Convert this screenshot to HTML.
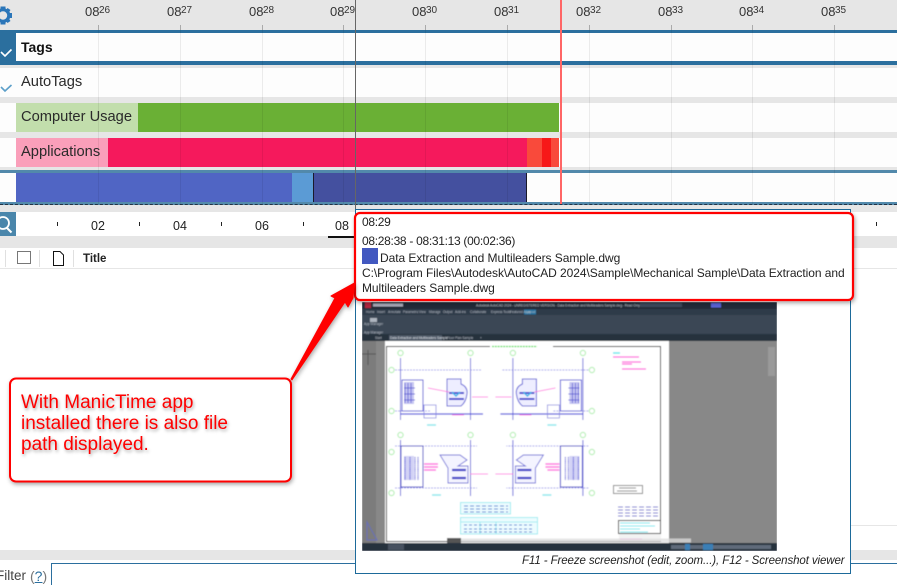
<!DOCTYPE html>
<html><head><meta charset="utf-8"><style>
html,body{margin:0;padding:0;width:897px;height:585px;overflow:hidden;background:#fff}
body{position:relative;font-family:"Liberation Sans",sans-serif;color:#222}
.a,.t{position:absolute}
.t{white-space:nowrap;line-height:1}
.h{font-size:13px;top:5px;color:#333}
.s{font-size:10px;top:6px;color:#333}
.g{position:absolute;top:25px;height:180px;width:1px;background:rgba(0,0,0,.07)}
.k{position:absolute;top:25px;height:5px;width:1px;background:#aaa}
.m{position:absolute;top:222px;height:4px;width:1px;background:#222}
.n{font-size:12.5px;top:220px;color:#222}
.l{font-size:14.7px;color:#2a2a2a}
.tip{font-size:12px;left:362px;color:#222;letter-spacing:-.06px}
.c{font-size:19px;left:21px;color:#f00;text-shadow:1px 2px 3px rgba(0,0,0,.35)}
</style></head><body>
<div class="a" style="left:0;top:0;width:897px;height:30px;background:#e6e6e6"></div>
<div class="a" style="left:0;top:30px;width:897px;height:35px;background:#2b6f9e"></div>
<div class="a" style="left:16px;top:33px;width:881px;height:28px;background:#fdfdfd"></div>
<div class="a" style="left:0;top:65px;width:897px;height:3px;background:#e6e6e6"></div>
<div class="a" style="left:0;top:68px;width:897px;height:29px;background:#fdfdfd"></div>
<div class="a" style="left:0;top:97px;width:897px;height:6px;background:#e6e6e6"></div>
<div class="a" style="left:0;top:103px;width:897px;height:29px;background:#fdfdfd"></div>
<div class="a" style="left:0;top:132px;width:897px;height:6px;background:#e6e6e6"></div>
<div class="a" style="left:0;top:138px;width:897px;height:29px;background:#fdfdfd"></div>
<div class="a" style="left:0;top:167px;width:897px;height:3px;background:#e6e6e6"></div>
<div class="a" style="left:0;top:170px;width:897px;height:3px;background:#5289ab"></div>
<div class="a" style="left:0;top:173px;width:897px;height:29px;background:#fdfdfd"></div>
<div class="a" style="left:0;top:202px;width:897px;height:3px;background:#5289ab"></div>
<div class="a" style="left:0;top:204px;width:897px;height:1px;border-top:1px dashed #234"></div>
<div class="a" style="left:0;top:205px;width:897px;height:7px;background:#e6e6e6"></div>
<div class="a" style="left:0;top:236px;width:897px;height:12px;background:#e6e6e6"></div>
<div class="a" style="left:0;top:268px;width:897px;height:1px;background:#e6e6e6"></div>
<div class="a" style="left:851px;top:525px;width:46px;height:1px;background:#e6e6e6"></div>
<div class="a" style="left:0;top:550px;width:897px;height:10px;background:#e6e6e6"></div>
<div class="a" style="left:51px;top:563px;width:846px;height:22px;border-top:1px solid #2b6f9e;border-left:1px solid #2b6f9e;box-sizing:border-box"></div>

<!-- bars -->
<div class="a" style="left:16px;top:103px;width:122px;height:29px;background:#c2deac"></div>
<div class="a" style="left:138px;top:103px;width:421px;height:29px;background:#6ab035"></div>
<div class="a" style="left:16px;top:138px;width:92px;height:29px;background:#fa9fba"></div>
<div class="a" style="left:108px;top:138px;width:419px;height:29px;background:#f5195c"></div>
<div class="a" style="left:527px;top:138px;width:15px;height:29px;background:#f94a3b"></div>
<div class="a" style="left:542px;top:138px;width:9px;height:29px;background:#f71818"></div>
<div class="a" style="left:551px;top:138px;width:8px;height:29px;background:#f94a3b"></div>
<div class="a" style="left:16px;top:173px;width:276px;height:29px;background:#5065c4"></div>
<div class="a" style="left:292px;top:173px;width:21px;height:29px;background:#5b9bd5"></div>
<div class="a" style="left:313px;top:173px;width:1px;height:29px;background:#1a1a2a"></div>
<div class="a" style="left:314px;top:173px;width:212px;height:29px;background:#44509f"></div>
<div class="a" style="left:526px;top:173px;width:1px;height:29px;background:#1a1a2a"></div>

<!-- grid -->
<div class="g" style="left:98px"></div><div class="g" style="left:180px"></div><div class="g" style="left:262px"></div><div class="g" style="left:343px"></div><div class="g" style="left:425px"></div><div class="g" style="left:507px"></div><div class="g" style="left:589px"></div><div class="g" style="left:671px"></div><div class="g" style="left:752px"></div><div class="g" style="left:834px"></div>
<div class="k" style="left:98px"></div><div class="k" style="left:180px"></div><div class="k" style="left:262px"></div><div class="k" style="left:343px"></div><div class="k" style="left:425px"></div><div class="k" style="left:507px"></div><div class="k" style="left:589px"></div><div class="k" style="left:671px"></div><div class="k" style="left:752px"></div><div class="k" style="left:834px"></div>

<!-- top labels -->
<span class="t h" style="left:85px">08</span><span class="t s" style="left:99px">26</span>
<span class="t h" style="left:167px">08</span><span class="t s" style="left:181px">27</span>
<span class="t h" style="left:249px">08</span><span class="t s" style="left:263px">28</span>
<span class="t h" style="left:330px">08</span><span class="t s" style="left:344px">29</span>
<span class="t h" style="left:412px">08</span><span class="t s" style="left:426px">30</span>
<span class="t h" style="left:494px">08</span><span class="t s" style="left:508px">31</span>
<span class="t h" style="left:576px">08</span><span class="t s" style="left:590px">32</span>
<span class="t h" style="left:658px">08</span><span class="t s" style="left:672px">33</span>
<span class="t h" style="left:739px">08</span><span class="t s" style="left:753px">34</span>
<span class="t h" style="left:821px">08</span><span class="t s" style="left:835px">35</span>

<!-- row labels -->
<span class="t" style="left:21px;top:40px;font-size:14px;font-weight:bold;color:#111">Tags</span>
<span class="t l" style="left:21px;top:75px">AutoTags</span>
<span class="t l" style="left:21px;top:110px">Computer Usage</span>
<span class="t l" style="left:21px;top:145px">Applications</span>

<!-- vertical markers -->
<div class="a" style="left:355px;top:0;width:1px;height:209px;background:#666"></div>
<div class="a" style="left:560px;top:0;width:2px;height:204px;background:#f66"></div>

<!-- mini ruler -->
<div class="a" style="left:0;top:212px;width:16px;height:24px;background:#4a86ab"></div>
<div class="m" style="left:57px"></div><div class="m" style="left:139px"></div><div class="m" style="left:221px"></div><div class="m" style="left:303px"></div><div class="m" style="left:876px"></div>
<span class="t n" style="left:91px">02</span><span class="t n" style="left:173px">04</span><span class="t n" style="left:255px">06</span><span class="t n" style="left:335px">08</span>
<div class="a" style="left:328px;top:236px;width:27px;height:2px;background:#111"></div>

<!-- table header -->
<div class="a" style="left:5px;top:250px;width:1px;height:17px;background:#e0e0e0"></div>
<div class="a" style="left:39px;top:250px;width:1px;height:17px;background:#e0e0e0"></div>
<div class="a" style="left:73px;top:250px;width:1px;height:17px;background:#e0e0e0"></div>
<div class="a" style="left:17px;top:251px;width:14px;height:13px;border:1px solid #777;box-sizing:border-box"></div>
<span class="t" style="left:83px;top:254px;font-size:11.5px;font-weight:bold;color:#222">Title</span>
<span class="t" style="left:-4px;top:569px;font-size:13.5px;color:#444">Filter</span>
<span class="t" style="left:30px;top:569px;font-size:14px;color:#777">(<span style="color:#2b6f9e;text-decoration:underline">?</span>)</span>

<!-- tooltip -->
<div class="a" style="left:355px;top:209px;width:496px;height:365px;box-sizing:border-box;border:1px solid #1d6a9a;background:#fff"></div>

<svg class="a" style="left:0;top:0" width="897" height="585" viewBox="0 0 897 585">
<defs>
<filter id="sh" x="-10%" y="-10%" width="125%" height="130%"><feDropShadow dx="1" dy="2" stdDeviation="2.2" flood-color="#000" flood-opacity=".35"/></filter>
<filter id="bl" x="0" y="0" width="100%" height="100%"><feGaussianBlur stdDeviation=".5"/></filter>
<g id="c1" fill="none" stroke="#b9f0b9" stroke-width="1.2"><circle cx="400.5" cy="353" r="2.6"/><circle cx="470.5" cy="353" r="2.6"/><circle cx="391.5" cy="370" r="2.6"/><circle cx="391.5" cy="411" r="2.6"/></g>
<g id="top">
 <use href="#c1"/>
 <path d="M395 370H482M395 411H430" stroke="#a9a9ee" stroke-width="1" stroke-dasharray="2 1" fill="none"/>
 <path d="M400.500 358V420M470.500 358V420" stroke="#7777dd" stroke-width="1" fill="none"/>
 <path d="M400 414H483" stroke="#5555dd" stroke-width="1.3" fill="none"/>
 <path d="M402 380H423V411H402Z" fill="none" stroke="#5a5ad8" stroke-width="1"/>
 <path d="M404 382H414V404H404Z" fill="#c5c5f2"/>
 <path d="M405 383V403M408 383V403M411 383V403M404 388H415M404 394H415M404 400H415" stroke="#5151d0" stroke-width=".7"/>
 <path d="M447 379H461V384Q468 387 467 394Q466 402 461 406H447Z" fill="#eef" stroke="#6868d8" stroke-width="1"/>
 <path d="M449 393H464M449 399H464" stroke="#4a4ad0" stroke-width="2"/>
 <path d="M452 392l4 4 4-4" stroke="#39b2e8" fill="none" stroke-width="1.500"/>
 <path d="M428 388L449 392M472 397H488M452 415H464" stroke="#ff66dd" stroke-width=".8" fill="none"/>
 <path d="M424 405H436V418H424Z" fill="none" stroke="#8a8ae0" stroke-width=".8"/>
 <path d="M427 425H436" stroke="#8ce8ee" stroke-width="1.500"/>
</g>
<g id="bot">
 <use href="#c1" transform="translate(0,82)"/>
 <path d="M395 446H477M395 488H477" stroke="#a9a9ee" stroke-width="1" stroke-dasharray="2 1" fill="none"/>
 <path d="M400.500 440V496M470.500 440V496" stroke="#6b6bdc" stroke-width="1" fill="none"/>
 <path d="M401 446H423V487H401Z" fill="none" stroke="#3f3fc8" stroke-width="1"/>
 <path d="M404 456H414V480H404Z" fill="#d3d3f5"/>
 <path d="M405 457V480M410 457V480M415 457V480M418 457V480" stroke="#5757d8" stroke-width="1.200" stroke-dasharray="1 .6"/>
 <path d="M440 455H460L467 460L458 466H468V483H448V468Z" fill="#f4f4ff" stroke="#7070d8" stroke-width=".9"/>
 <path d="M452 470H466M452 478H466" stroke="#4040c8" stroke-width="2.200"/>
 <path d="M424 464H438M424 467H438M424 470H436" stroke="#ff77e0" stroke-width="1.500"/>
 <path d="M470 474H488" stroke="#ff66dd" stroke-width=".8"/>
 <path d="M432 495H441" stroke="#8ce8ee" stroke-width="1.500"/>
</g>
</defs>

<!-- embedded CAD screenshot -->
<g filter="url(#bl)">
 <rect x="362" y="302" width="415" height="249" fill="#888"/>
 <rect x="362" y="302" width="415" height="7" fill="#212b38"/>
 <rect x="362" y="309" width="415" height="25" fill="#3b4655"/>
 <rect x="362" y="309" width="415" height="6" fill="#2f3a49"/>
 <rect x="362" y="334" width="415" height="7" fill="#28323e"/>
 <rect x="365" y="302" width="6" height="6" fill="#b3263f"/>
 <rect x="373" y="303.500" width="30" height="3" fill="#aab"/>
 <rect x="524" y="309.500" width="12" height="5" fill="#1f6f9e"/>
 <rect x="389" y="335" width="53" height="6" fill="#4b5665"/>
 <text x="476" y="306.500" font-size="3.200" fill="#c6ccd4" font-family="Liberation Sans">Autodesk AutoCAD 2024 - UNREGISTERED VERSION - Data Extraction and Multileaders Sample.dwg - Read Only</text>
 <g font-size="3.200" fill="#b6bdc6" font-family="Liberation Sans">
  <text x="366" y="313">Home</text><text x="377" y="313">Insert</text><text x="388" y="313">Annotate</text><text x="403" y="313">Parametric</text><text x="419" y="313">View</text><text x="429" y="313">Manage</text><text x="443" y="313">Output</text><text x="455" y="313">Add-ins</text><text x="470" y="313">Collaborate</text><text x="491" y="313">Express Tools</text><text x="510" y="313">Featured Apps</text><text x="526" y="313">Layout</text>
  <text x="364" y="325">App Manager</text><text x="364" y="333.500">App Manager</text>
  <text x="375" y="339">Start</text><text x="390" y="339" fill="#e4e8ee">Data Extraction and Multileaders Sample</text><text x="447" y="339">Floor Plan Sample</text><text x="480" y="339">+</text>
  <text x="376" y="548.500">Model</text><text x="389" y="548.500">Layout1</text>
 </g>
 <rect x="640" y="303" width="42" height="4" fill="#3d4a5c"/>
 <rect x="711" y="303" width="10" height="4.500" fill="#5a63d8"/>
 <path d="M370 318h7v4h-7z" fill="#aeb5bf"/>
 <rect x="362" y="341" width="14" height="202" fill="#7c7c7c"/>
 <path d="M368 350V365M362 354H376" stroke="#555" stroke-width="1"/>
 <rect x="385" y="341" width="284" height="202" fill="#fff"/>
 <rect x="386.500" y="346.500" width="274" height="195" fill="none" stroke="#222" stroke-width="1"/>
 <rect x="490" y="345" width="63" height="3" fill="#fff"/>
 <path d="M492 346.500H537" stroke="#55dd55" stroke-width="1.200" stroke-dasharray="2 .8"/>
 <use href="#top"/><use href="#top" transform="translate(983.400,0) scale(-1,1)"/>
 <use href="#bot"/><use href="#bot" transform="translate(983.400,0) scale(-1,1)"/>
 <path d="M367 522L377 540H367Z" fill="none" stroke="#6770b8" stroke-width="1"/>
 <!-- tables -->
 <rect x="460.500" y="502.500" width="50" height="11.500" fill="#ecfcff" stroke="#8ee8ee" stroke-width=".8"/>
 <path d="M464 506H508M464 509H508M464 512H508" stroke="#5a8ad6" stroke-width=".9" stroke-dasharray="4 2"/>
 <rect x="460.500" y="517.500" width="77" height="16.500" fill="#ecfcff" stroke="#8ee8ee" stroke-width=".8"/>
 <path d="M461 522H537M480 522V534M496 522V534" stroke="#8ee8ee" stroke-width=".8"/>
 <path d="M464 525H534M464 529H534M464 532H534" stroke="#5a8ad6" stroke-width=".9" stroke-dasharray="3 2"/>
 <!-- notes / title block -->
 <path d="M613 353H620" stroke="#67e8ee" stroke-width="1.500"/>
 <path d="M613 357H639M622 362H641M622 364H632M622 369H646" stroke="#ff66dd" stroke-width="1.200"/>
 <rect x="613.500" y="485.500" width="29" height="8" fill="#fff" stroke="#888" stroke-width="1"/>
 <path d="M619 488H636M617 491H637" stroke="#888" stroke-width=".9"/>
 <path d="M618 507H659M618 510H659M618 513H659M618 516H659" stroke="#7070d0" stroke-width=".9" stroke-dasharray="5 2"/>
 <rect x="618.500" y="520.500" width="42" height="13" fill="#fff" stroke="#333" stroke-width="1"/>
 <path d="M620 523H650M620 526H655M620 529H640M620 532H648" stroke="#67e8ee" stroke-width="1"/>
 <rect x="619" y="534" width="42" height="7" fill="#f3f3f3"/>
 <path d="M620 539H642" stroke="#ff88e4" stroke-width="1"/>
 <rect x="447" y="538.500" width="244" height="4" fill="#ddd" fill-opacity=".75"/>
 <rect x="447" y="538" width="14" height="5" fill="#555"/>
 <rect x="768" y="347" width="7" height="29" fill="#9a9a9a"/>
 <rect x="362" y="543" width="415" height="8" fill="#27313d"/>
 <rect x="388" y="544" width="16" height="6" fill="#46515f"/>
 <rect x="671" y="545" width="100" height="4" fill="#5f6b7a"/>
 <rect x="685" y="544" width="5" height="6" fill="#3b7fb6"/><rect x="703" y="544" width="10" height="6" fill="#3b7fb6"/>
</g>

<!-- red box -->
<rect x="355" y="213" width="498" height="87" rx="5" fill="#fff" stroke="#f00" stroke-width="2.200" filter="url(#sh)"/>
<rect x="362" y="248" width="16" height="16" fill="#4258c0"/>

<!-- callout -->
<rect x="10" y="378.500" width="281" height="103" rx="6" fill="#fff" stroke="#f00" stroke-width="2" filter="url(#sh)"/>
<path d="M291 379L335 298L331 296L354.500 283L353 298L348 307L345 302L292 380Z" fill="#f00" stroke="#f00" stroke-width="1" stroke-linejoin="round" filter="url(#sh)"/>

<!-- gear -->
<g fill="#2b76b9">
 <circle cx="3" cy="15.500" r="5.800" fill="none" stroke="#2b76b9" stroke-width="3.200"/>
 <path d="M0.500 6.500h5v3h-5zM0.500 21.500h5v3h-5zM9 13h3v5h-3zM-3 13h3v5h-3z"/>
 <path d="M7.500 8l3 2-2 3-3-2zM5.500 20l3-2 2 3-3 2z"/>
</g>
<!-- check marks -->
<path d="M1 52L5 56L11.500 49.500" fill="none" stroke="#fff" stroke-width="1.600"/>
<path d="M1 87L5 91L11.500 85" fill="none" stroke="#5c9fc9" stroke-width="1.600"/>
<!-- search -->
<circle cx="3" cy="223" r="6" fill="none" stroke="#fff" stroke-width="1.800"/>
<path d="M7 228L11.500 232.500" stroke="#fff" stroke-width="2"/>
<!-- doc icon -->
<path d="M53.500 251.500H60L63.500 255V265.500H53.500Z" fill="#fff" stroke="#111" stroke-width="1"/>
</svg>

<span class="t tip" style="top:216px;letter-spacing:-.3px">08:29</span>
<span class="t tip" style="top:235px;letter-spacing:-.3px">08:28:38 - 08:31:13 (00:02:36)</span>
<span class="t tip" style="left:380px;top:252px">Data Extraction and Multileaders Sample.dwg</span>
<span class="t tip" style="top:267px">C:\Program Files\Autodesk\AutoCAD 2024\Sample\Mechanical Sample\Data Extraction and</span>
<span class="t tip" style="top:282px">Multileaders Sample.dwg</span>
<span class="t" style="left:522px;top:556px;font-size:11.5px;letter-spacing:-.1px;font-style:italic;color:#222">F11 - Freeze screenshot (edit, zoom...), F12 - Screenshot viewer</span>

<span class="t c" style="top:393px">With ManicTime app</span>
<span class="t c" style="top:414px">installed there is also file</span>
<span class="t c" style="top:435px">path displayed.</span>
</body></html>
